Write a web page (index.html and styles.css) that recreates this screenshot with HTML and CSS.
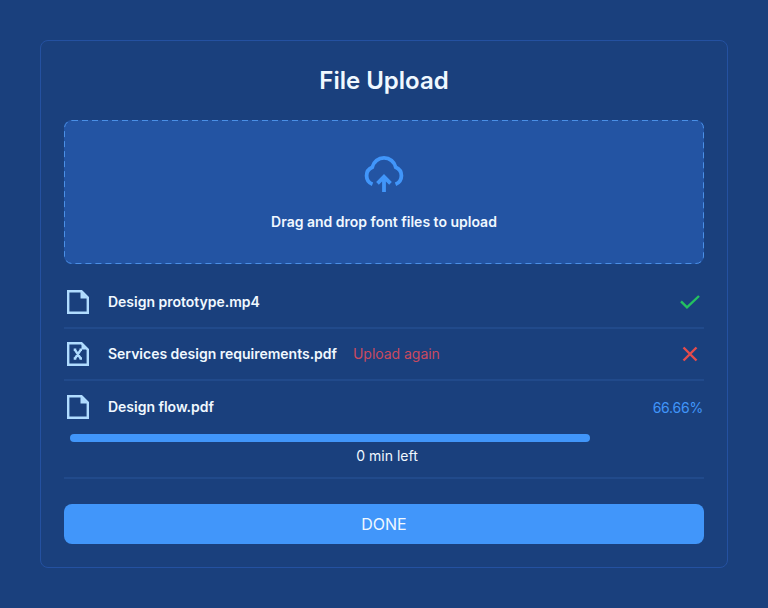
FILE: index.html
```html
<!DOCTYPE html>
<html lang="en">
<head>
<meta charset="utf-8">
<title>File Upload</title>
<link rel="stylesheet" href="styles.css">
</head>
<body>
<main class="card">
  <h1 class="title">File Upload</h1>
  <section class="dropzone">
    <svg class="dash" width="640" height="144"><rect x=".5" y=".5" width="639" height="143" rx="7.5"/></svg>
    <svg class="cloud" width="42" height="38" viewBox="0 0 42 38">
      <path d="M9.5 29.3A9.2 9.2 0 0 1 9.3 12.2A12 12 0 0 1 32.7 12.2A9.2 9.2 0 0 1 32.5 29.3"/>
      <path d="M21 37V22.5M14.5 28.3L21 21.8L27.5 28.3"/>
    </svg>
    <p class="hint">Drag and drop font files to upload</p>
  </section>
  <ul class="files">
    <li class="file">
      <div class="line">
        <svg class="doc" width="22" height="24" viewBox="0 0 22 24"><path class="sheet" d="M1.2 1.2H14.5L20.8 7.5V22.8H1.2Z"/><path class="fold" d="M13.5 1V8.5H21Z"/></svg>
        <span class="name">Design prototype.mp4</span>
        <svg class="status ok" width="20" height="14" viewBox="0 0 20 14"><path d="M1 6.3L7 12.3L19 1"/></svg>
      </div>
    </li>
    <li class="file">
      <div class="line">
        <svg class="doc" width="22" height="24" viewBox="0 0 22 24"><path class="sheet" d="M1.2 1.2H14.5L20.8 7.5V22.8H1.2Z"/><path class="fold" d="M14.5 1V7.5H21Z"/><path class="mark" d="M8 7.8L13.7 16.5M13.7 7.8L8 16.5M6.7 7.8H9.3M12.5 7.8H15M6.7 16.5H9.3M12.5 16.5H15"/></svg>
        <span class="name">Services design requirements.pdf</span>
        <a class="retry">Upload again</a>
        <svg class="status bad" width="16" height="16" viewBox="0 0 16 16"><path d="M1.5 1.5L14.5 14.5M14.5 1.5L1.5 14.5"/></svg>
      </div>
    </li>
    <li class="file active">
      <div class="line">
        <svg class="doc" width="22" height="24" viewBox="0 0 22 24"><path class="sheet" d="M1.2 1.2H14.5L20.8 7.5V22.8H1.2Z"/><path class="fold" d="M13.5 1V8.5H21Z"/></svg>
        <span class="name">Design flow.pdf</span>
        <span class="percent">66.66%</span>
      </div>
      <div class="bar"></div>
      <p class="left">0 min left</p>
    </li>
  </ul>
  <button class="done">DONE</button>
</main>
</body>
</html>
```

FILE: styles.css
```css
* { box-sizing: border-box; }
body {
  margin: 0;
  padding: 40px;
  background: #1a407d;
  color: #f0f8ff;
  font-family: Inter, "Liberation Sans", sans-serif;
  font-size: 14px;
}
h1, p, ul { margin: 0; padding: 0; }
svg { display: block; fill: none; flex: none; }
.card {
  height: 528px;
  padding: 23px;
  border: 1px solid #2451a1;
  border-radius: 8px;
}
.title {
  height: 56px;
  line-height: 33px;
  font-size: 24px;
  font-weight: 600;
  text-align: center;
}
.dropzone {
  position: relative;
  height: 144px;
  padding-top: 35px;
  border-radius: 8px;
  background: #2354a3;
}
.dash { position: absolute; inset: 0; }
.dash rect { stroke: #4a8fe6; stroke-dasharray: 6 4; }
.cloud { margin: 0 auto; stroke: #4196fa; stroke-width: 3.8; }
.hint {
  margin-top: 19px;
  line-height: 20px;
  font-weight: 600;
  text-align: center;
}
.files { margin-top: 13px; list-style: none; }
.file {
  height: 52px;
  border-bottom: 2px solid #214a8b;
}
.file.active { height: 98px; padding-top: 1px; }
.line {
  display: flex;
  align-items: center;
  height: 50px;
  padding-left: 3px;
}
.name { margin-left: 19px; padding-bottom: 2px; font-weight: 600; letter-spacing: -.01px; }
.doc { stroke: #b0dcff; }
.sheet { stroke-width: 2.4; }
.fold { fill: #b0dcff; stroke: none; }
.mark { stroke-width: 2.4; }
.status { margin-left: auto; stroke-width: 2.4; }
.ok { margin-right: 4px; stroke: #24c160; }
.bad { margin-right: 6px; stroke: #e54c4c; }
.retry { margin-left: 16px; padding-bottom: 2px; color: #c94a60; letter-spacing: -.03px; }
.percent { margin-left: auto; margin-right: 1px; color: #4196fa; letter-spacing: -.22px; }
.active .name { padding-bottom: 1px; }
.bar {
  width: 520px;
  height: 8px;
  margin: 2px 0 0 6px;
  border-radius: 4px;
  background: #4196fa;
}
.left {
  margin: 4px 0 0 6px;
  line-height: 20px;
  text-align: center;
}
.done {
  display: block;
  width: 100%;
  height: 40px;
  margin-top: 25px;
  padding: 0;
  border: 0;
  border-radius: 8px;
  background: #4196fa;
  color: #f0f8ff;
  font: 16px Inter, "Liberation Sans", sans-serif;
}
```
